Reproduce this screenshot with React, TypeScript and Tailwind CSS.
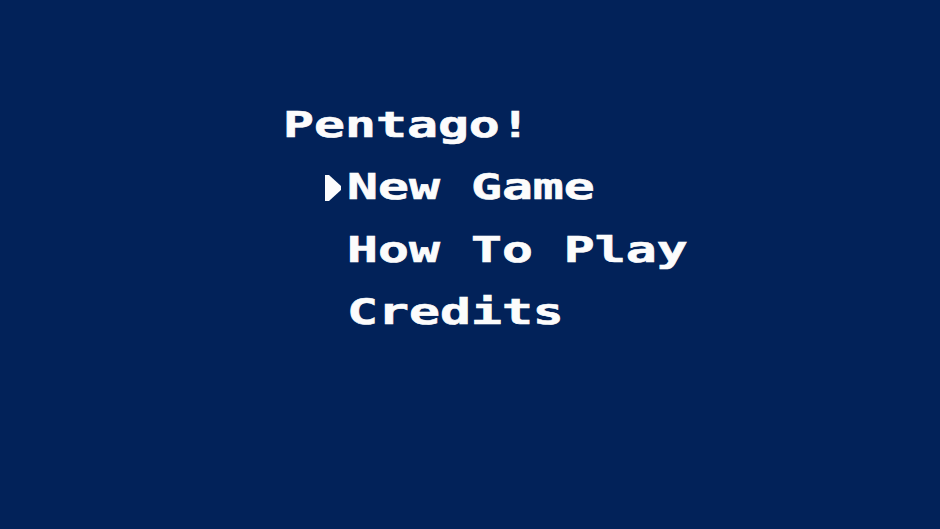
import { useState } from 'react'

const MENU_ITEMS = ['New Game', 'How To Play', 'Credits']

// chunky monospace text stretched sideways so each glyph fills an 8-bit style tile
function TileText({ children }: { children: string }) {
  return (
    <span className="inline-block origin-left scale-x-[1.47] whitespace-pre [-webkit-text-stroke:0.6px_#fcfcfc]">
      {children}
    </span>
  )
}

function Cursor() {
  return (
    <svg width="16" height="26" viewBox="0 0 16 26" className="block">
      <polygon points="0,0 4,0 16,11 16,15 4,26 0,26" fill="#fcfcfc" />
    </svg>
  )
}

export default function App() {
  const [selected] = useState(0)

  return (
    <main
      className="h-[529px] w-[940px] overflow-hidden bg-[#022259] text-[#fcfcfc]"
      style={{ fontFamily: '"DejaVu Sans Mono", "Liberation Mono", monospace' }}
    >
      <div className="flex flex-col pl-[283px] pt-[94px] text-[35px] font-bold leading-[62.4px]">
        <h1 className="h-[62.4px]">
          <TileText>Pentago!</TileText>
        </h1>

        <ul className="flex flex-col">
          {MENU_ITEMS.map((item, i) => (
            <li key={item} className="flex h-[62.4px] items-center">
              <span className="flex w-[64px] justify-end pr-[6px]">
                {i === selected && <Cursor />}
              </span>
              <TileText>{item}</TileText>
            </li>
          ))}
        </ul>
      </div>
    </main>
  )
}
